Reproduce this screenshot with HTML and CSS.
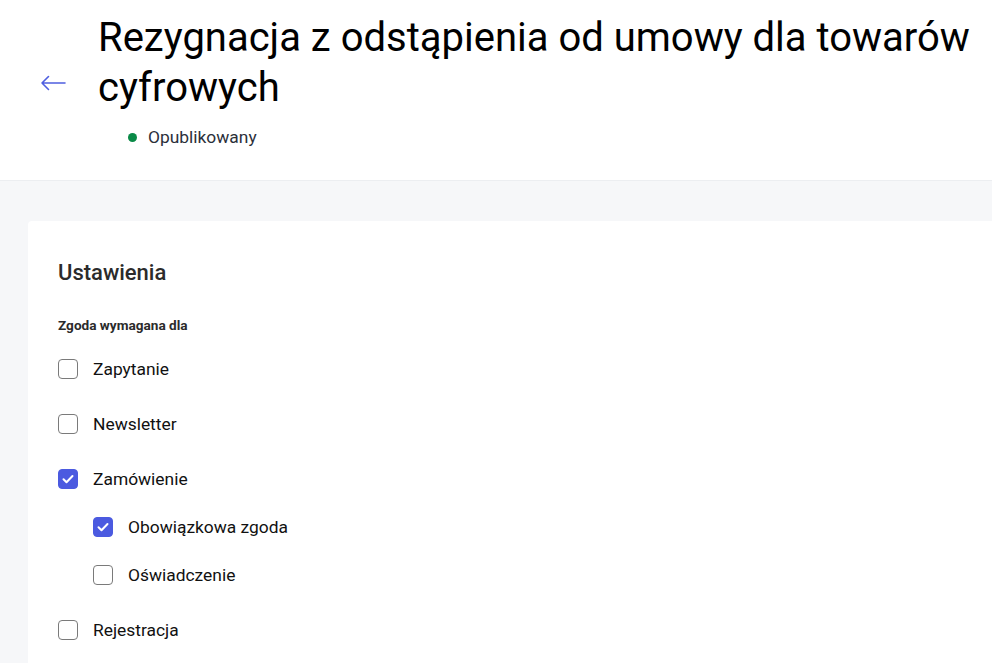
FILE: index.html
```html
<!DOCTYPE html>
<html lang="pl">
<head>
<meta charset="utf-8">
<link rel="stylesheet" href="styles.css">
</head>
<body>
<header class="header">
  <button class="back" aria-label="Wstecz">
    <svg width="26" height="16" viewBox="0 0 26 16"><path d="M25 8H2M8.5 1.5L2 8l6.5 6.5" fill="none" stroke="#4f5fe0" stroke-width="1.6" stroke-linecap="round" stroke-linejoin="round"/></svg>
  </button>
  <div class="header-text">
    <h1 class="title">Rezygnacja z odstąpienia od umowy dla towarów cyfrowych</h1>
    <div class="status"><span class="dot"></span>Opublikowany</div>
  </div>
</header>
<main class="main">
  <section class="card">
    <h2 class="card-title">Ustawienia</h2>
    <div class="group-label">Zgoda wymagana dla</div>
    <ul class="list">
      <li class="item"><span class="box"></span>Zapytanie</li>
      <li class="item"><span class="box"></span>Newsletter</li>
      <li class="item"><span class="box checked"><svg viewBox="0 0 20 20" width="20" height="20"><path d="M5.5 10.3l3 3 6-6.3" fill="none" stroke="#fff" stroke-width="2" stroke-linecap="round" stroke-linejoin="round"/></svg></span>Zamówienie</li>
      <li class="sub">
        <ul class="sublist">
          <li class="item"><span class="box checked"><svg viewBox="0 0 20 20" width="20" height="20"><path d="M5.5 10.3l3 3 6-6.3" fill="none" stroke="#fff" stroke-width="2" stroke-linecap="round" stroke-linejoin="round"/></svg></span>Obowiązkowa zgoda</li>
          <li class="item"><span class="box"></span>Oświadczenie</li>
        </ul>
      </li>
      <li class="item"><span class="box"></span>Rejestracja</li>
    </ul>
  </section>
</main>
</body>
</html>
```
FILE: styles.css
```css
* { box-sizing: border-box; }
html, body { margin: 0; padding: 0; }
body {
  font-family: Roboto, "Noto Sans", sans-serif;
  background: #f6f7f9;
  color: #222;
  height: 663px;
  overflow: hidden;
}
.header {
  background: #fff;
  border-bottom: 1px solid #eceef1;
  height: 181px;
  padding-top: 13px;
  display: flex;
  align-items: flex-start;
}
.back {
  border: 0;
  background: none;
  padding: 0;
  margin-left: 40px;
  margin-right: 32px;
  margin-top: 62px;
  width: 26px;
  height: 16px;
  display: flex;
  flex: none;
}
.header-text {
  display: flex;
  flex-direction: column;
}
.title {
  margin: 0;
  font-size: 40px;
  font-weight: 400;
  line-height: 50px;
  color: #000;
}
.status {
  display: flex;
  align-items: center;
  margin-left: 30px;
  margin-top: 12px;
  font-size: 17.4px;
  color: #2b2f3a;
  line-height: 24px;
}
.dot {
  width: 9px;
  height: 9px;
  border-radius: 50%;
  background: #0a8a47;
  margin-right: 11px;
}
.main {
  padding: 40px 0 0 28px;
}
.card {
  background: #fff;
  border-radius: 4px 0 0 0;
  padding: 38px 30px 20px;
  min-height: 500px;
}
.card-title {
  margin: 0;
  font-size: 22px;
  font-weight: 500;
  color: #2b2b2b;
  line-height: 28px;
}
.group-label {
  margin-top: 30px;
  font-size: 13.6px;
  font-weight: 700;
  color: #2b2b2b;
  line-height: 16px;
}
.list, .sublist {
  list-style: none;
  margin: 0;
  padding: 0;
}
.list { margin-top: 26px; }
.list > .item { margin-bottom: 35px; }
.list > .item, .sublist > .item {
  display: flex;
  align-items: center;
  font-size: 17.4px;
  color: #111;
  line-height: 20px;
  height: 20px;
}
.sub { margin-top: -7px; margin-bottom: 35px; }
.sublist { padding-left: 35px; }
.sublist > .item { margin-bottom: 28px; }
.sublist > .item:last-child { margin-bottom: 0; }
.box {
  width: 20px;
  height: 20px;
  border: 1px solid #7a7a7a;
  border-radius: 4px;
  margin-right: 15px;
  flex: none;
  display: flex;
}
.box.checked {
  background: #4b5ae0;
  border-color: #4b5ae0;
}
.box svg { margin: -1px; }
```
